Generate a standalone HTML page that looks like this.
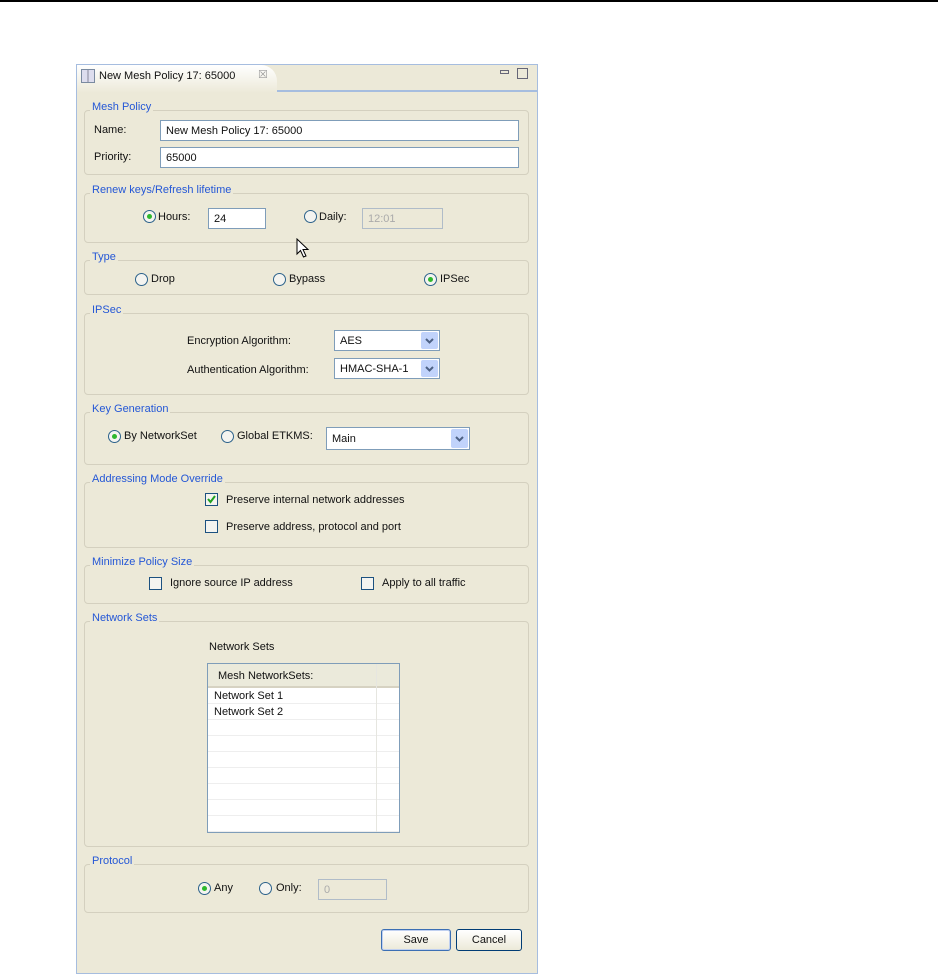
<!DOCTYPE html>
<html><head><meta charset="utf-8"><style>
*{box-sizing:border-box;margin:0;padding:0}
body{width:938px;height:974px;background:#fff;position:relative;overflow:hidden;font-family:"Liberation Sans",sans-serif;font-size:11px;color:#111}
.a{position:absolute}
.t{position:absolute;white-space:nowrap;line-height:13px}
.g{position:absolute;border:1px solid #d4d0bf;border-radius:4px;left:84px;width:445px}
.gl{position:absolute;color:#2457d6;background:#ece9d8;padding:0 2px;left:90px;white-space:nowrap;line-height:13px}
.in{position:absolute;background:#fff;border:1px solid #7f9db9;height:21px;padding:4px 5px 0;line-height:13px}
.dis{background:#ece9d8;color:#aaa;border-color:#b0bcc8}
.r{position:absolute;width:13px;height:13px;border:1px solid #2c628b;border-radius:50%;background:#f4f4f0}
.r.on::after{content:"";position:absolute;left:3px;top:3px;width:5px;height:5px;border-radius:50%;background:#2eb82e}
.c{position:absolute;width:13px;height:13px;border:1px solid #1c5180;background:#f4f4f0}
.dd{position:absolute;right:1px;top:1px;width:17px;bottom:1px;background:#c1d3fb;border-radius:2px}
.dd svg{position:absolute;left:4px;top:50%;margin-top:-3px}
.btn{position:absolute;height:22px;border:1px solid #003c74;border-radius:3px;background:linear-gradient(#fff,#ece9d8);text-align:center;line-height:20px}
</style></head><body>
<div class="a" style="left:0;top:0;width:938px;height:2px;background:#000"></div>
<div class="a" style="left:76px;top:64px;width:462px;height:910px;background:#ece9d8;border:1px solid #a6bddf"></div>
<div class="a" style="left:77px;top:65px;width:460px;height:27px;background:#ece9d8;border-bottom:2px solid #a6bddf"></div>
<div class="a" style="left:77px;top:65px;width:200px;height:28px;background:linear-gradient(#fff,#ece9d8);border-top-right-radius:16px"></div>
<div class="a" style="left:81px;top:69px;width:14px;height:14px;border:1px solid #7a8aa0;background:linear-gradient(90deg,#dde 45%,#889 45%,#889 55%,#dde 55%)"></div>
<div class="t" style="left:99px;top:70px">New Mesh Policy 17: 65000</div>
<div class="t" style="left:258px;top:69px;color:#999">☒</div>
<div class="a" style="left:500px;top:70px;width:9px;height:4px;border:1px solid #667"></div>
<div class="a" style="left:517px;top:68px;width:11px;height:11px;border:1px solid #667"></div>

<div class="g" style="top:110px;height:65px"></div><div class="gl" style="top:101px">Mesh Policy</div>
<div class="t" style="left:94px;top:124px">Name:</div>
<div class="in" style="left:160px;top:120px;width:359px">New Mesh Policy 17: 65000</div>
<div class="t" style="left:94px;top:151px">Priority:</div>
<div class="in" style="left:160px;top:147px;width:359px">65000</div>

<div class="g" style="top:193px;height:50px"></div><div class="gl" style="top:184px">Renew keys/Refresh lifetime</div>
<div class="r on" style="left:143px;top:210px"></div><div class="t" style="left:158px;top:211px">Hours:</div>
<div class="in" style="left:208px;top:208px;width:58px">24</div>
<div class="r" style="left:304px;top:210px"></div><div class="t" style="left:319px;top:211px">Daily:</div>
<div class="in dis" style="left:362px;top:208px;width:81px">12:01</div>
<svg class="a" style="left:296px;top:238px" width="14" height="22"><path d="M1 1 L1 16 L4.5 12.5 L7.5 19 L10 18 L7 11.5 L12 11.5 Z" fill="#fff" stroke="#000"/></svg>

<div class="g" style="top:260px;height:35px"></div><div class="gl" style="top:251px">Type</div>
<div class="r" style="left:135px;top:273px"></div><div class="t" style="left:151px;top:273px">Drop</div>
<div class="r" style="left:273px;top:273px"></div><div class="t" style="left:289px;top:273px">Bypass</div>
<div class="r on" style="left:424px;top:273px"></div><div class="t" style="left:440px;top:273px">IPSec</div>

<div class="g" style="top:313px;height:82px"></div><div class="gl" style="top:304px">IPSec</div>
<div class="t" style="left:187px;top:335px">Encryption Algorithm:</div>
<div class="in" style="left:334px;top:330px;width:106px">AES<div class="dd"><svg width="9" height="6"><path d="M1 1 L4.5 4.5 L8 1" stroke="#4d6185" stroke-width="2" fill="none"/></svg></div></div>
<div class="t" style="left:187px;top:364px">Authentication Algorithm:</div>
<div class="in" style="left:334px;top:358px;width:106px">HMAC-SHA-1<div class="dd"><svg width="9" height="6"><path d="M1 1 L4.5 4.5 L8 1" stroke="#4d6185" stroke-width="2" fill="none"/></svg></div></div>

<div class="g" style="top:412px;height:53px"></div><div class="gl" style="top:403px">Key Generation</div>
<div class="r on" style="left:108px;top:430px"></div><div class="t" style="left:124px;top:430px">By NetworkSet</div>
<div class="r" style="left:221px;top:430px"></div><div class="t" style="left:237px;top:430px">Global ETKMS:</div>
<div class="in" style="left:326px;top:427px;width:144px;height:23px;padding-top:5px">Main<div class="dd"><svg width="9" height="6"><path d="M1 1 L4.5 4.5 L8 1" stroke="#4d6185" stroke-width="2" fill="none"/></svg></div></div>

<div class="g" style="top:482px;height:66px"></div><div class="gl" style="top:473px">Addressing Mode Override</div>
<div class="c" style="left:205px;top:493px"><svg width="11" height="11" style="position:absolute;left:0;top:0"><path d="M2 5 L4.5 8 L9 2" stroke="#21a121" stroke-width="2" fill="none"/></svg></div>
<div class="t" style="left:226px;top:494px">Preserve internal network addresses</div>
<div class="c" style="left:205px;top:520px"></div><div class="t" style="left:226px;top:521px">Preserve address, protocol and port</div>

<div class="g" style="top:565px;height:39px"></div><div class="gl" style="top:556px">Minimize Policy Size</div>
<div class="c" style="left:149px;top:577px"></div><div class="t" style="left:170px;top:577px">Ignore source IP address</div>
<div class="c" style="left:361px;top:577px"></div><div class="t" style="left:382px;top:577px">Apply to all traffic</div>

<div class="g" style="top:621px;height:226px"></div><div class="gl" style="top:612px">Network Sets</div>
<div class="t" style="left:209px;top:641px">Network Sets</div>
<div class="a" style="left:207px;top:663px;width:193px;height:170px;border:1px solid #7f9db9;background:#fff;
background-image:repeating-linear-gradient(#fff 0,#fff 15px,#eee 15px,#eee 16px);background-position:0 24px;background-repeat:repeat-y">
<div class="a" style="left:0;top:0;width:191px;height:24px;background:#ebeadb;border-bottom:2px solid #d6d2c2"></div>
<div class="a" style="left:168px;top:0;width:1px;height:168px;background:#e6e6e0"></div>
<div class="t" style="left:10px;top:6px">Mesh NetworkSets:</div>
<div class="t" style="left:6px;top:26px">Network Set 1</div>
<div class="t" style="left:6px;top:42px">Network Set 2</div>
</div>

<div class="g" style="top:864px;height:49px"></div><div class="gl" style="top:855px">Protocol</div>
<div class="r on" style="left:198px;top:882px"></div><div class="t" style="left:214px;top:882px">Any</div>
<div class="r" style="left:259px;top:882px"></div><div class="t" style="left:276px;top:882px">Only:</div>
<div class="in dis" style="left:318px;top:879px;width:69px">0</div>

<div class="btn" style="left:381px;top:929px;width:70px;border-color:#3c6fb4;box-shadow:inset 0 0 0 1px #c0d0f0">Save</div>
<div class="btn" style="left:456px;top:929px;width:66px">Cancel</div>
</body></html>
